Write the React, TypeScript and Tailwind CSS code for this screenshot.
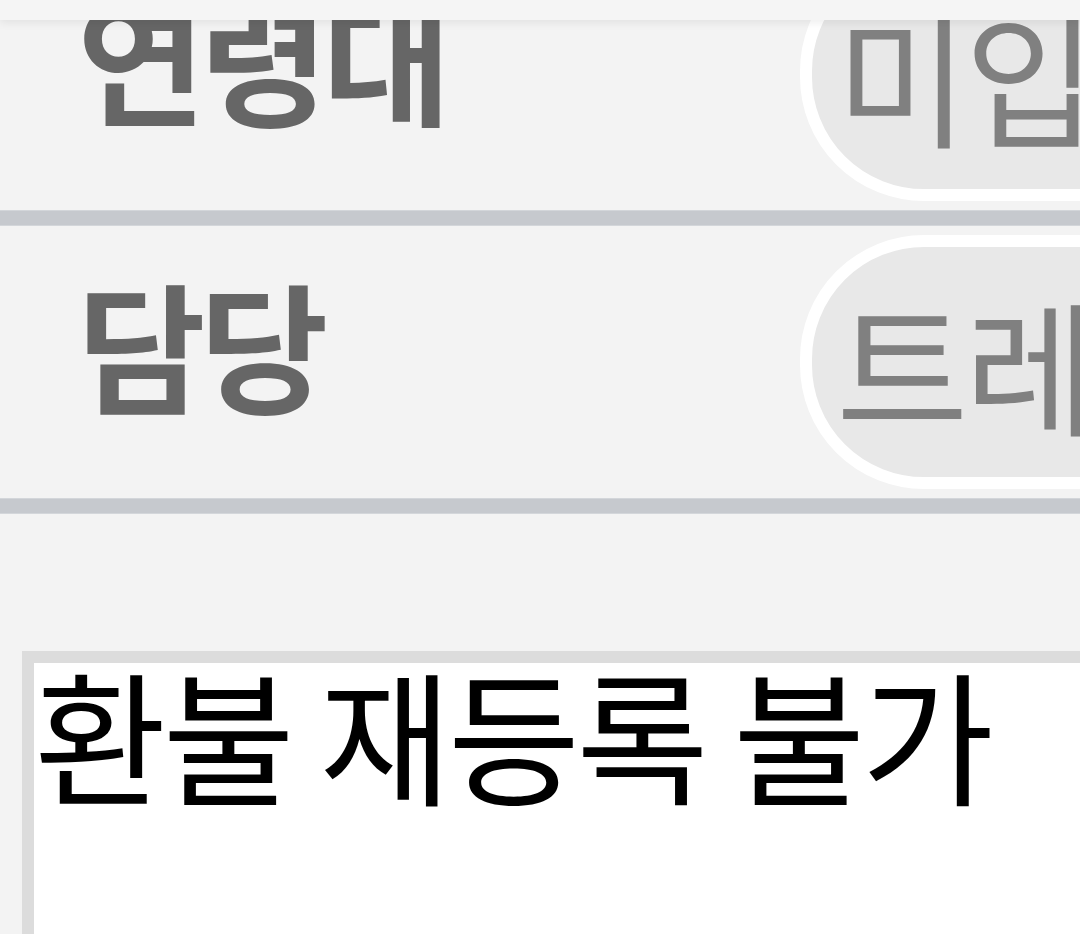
import React from 'react';

const rows = [
  { label: '연령대', value: '미입력' },
  { label: '담당', value: '트레이너' },
];

const font = { fontFamily: '"Noto Sans CJK KR", "Noto Sans", sans-serif' };

export default function App() {
  return (
    <div className="relative w-[1080px] h-[934px] overflow-hidden bg-[#f3f3f3]" style={font}>
      <div className="absolute inset-x-0 top-0 z-10 h-[20px] bg-[#f5f5f5] shadow-[0_3px_8px_rgba(0,0,0,0.07)]" />

      <div className="w-[1600px] -mt-[62px]">
        {rows.map((row) => (
          <div key={row.label}>
            <div className="flex items-center h-[272px]">
              <div className="flex-none w-[800px] pl-[77px] pb-[40px] whitespace-nowrap text-[140px] leading-none font-bold tracking-[-6px] text-[#666666]">
                {row.label}
              </div>
              <div className="flex-none flex items-center h-[254px] w-[760px] rounded-[124px] border-[12px] border-white bg-[#e8e8e8] pl-[24px] whitespace-nowrap text-[144px] leading-none tracking-[-4px] text-[#808080]">
                {row.value}
              </div>
            </div>
            <div className="h-[16px] bg-[#c6c9ce] border-y border-[#d3d6da]" />
          </div>
        ))}

        {/* 메모 입력 */}
        <div className="pl-[22px] pt-[137px]">
          <textarea
            readOnly
            defaultValue="환불 재등록 불가"
            className="block w-[1300px] h-[400px] resize-none border-[12px] border-[#dcdcdc] bg-white p-0 text-[144px] leading-[0.97] tracking-[-4px] text-black outline-none"
          />
        </div>
      </div>
    </div>
  );
}
